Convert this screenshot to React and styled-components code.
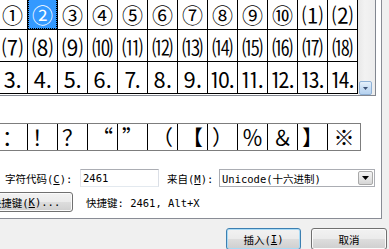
import React from 'react';
import styled, { createGlobalStyle } from 'styled-components';

const Global = createGlobalStyle`
  html, body { margin: 0; padding: 0; background: #f0f0f0; overflow: hidden; }
  body { width: 389px; height: 249px; }
`;

const Dialog = styled.div`
  width: 389px;
  height: 249px;
  overflow: hidden;
  background: #f0f0f0;
  display: flex;
  flex-direction: column;
  font-family: "DejaVu Sans Mono", "Noto Sans CJK SC", monospace;
  font-size: 10.5px;
  color: #000;
`;

const TabPage = styled.div`
  box-sizing: border-box;
  flex: none;
  width: 382px;
  height: 219px;
  background: #fff;
  border-right: 1px solid #898c95;
  border-bottom: 1px solid #898c95;
  display: flex;
  flex-direction: column;
`;

const SymbolBox = styled.div`
  display: flex;
  align-self: flex-start;
  margin: -4px 0 0 -4px;
  border: 1px solid #828790;
`;

const Grid = styled.div`
  display: grid;
  grid-template-columns: repeat(12, 29px);
  grid-auto-rows: 31px;
  gap: 1px;
  background: #000;
  border: 1px solid #000;
  margin-bottom: 1px;
`;

const Cell = styled.div`
  display: flex;
  align-items: center;
  justify-content: center;
  overflow: hidden;
  background: ${(p) => (p.$sel ? '#3399ff' : '#fff')};
  color: ${(p) => (p.$sel ? '#fff' : '#000')};
  font-family: "Noto Sans CJK SC", sans-serif;
  font-size: ${(p) => p.$size}px;
  line-height: 1.2;
  padding-top: 2px;
  box-sizing: border-box;
  ${(p) => (p.$sel ? 'outline: 1px dotted #000; outline-offset: -1px;' : '')}
`;

const ScrollBar = styled.div`
  box-sizing: border-box;
  width: 17px;
  padding: 0 3px 0 1px;
  background: linear-gradient(90deg, #e8e8e8, #f2f2f2 40%, #ededed);
  display: flex;
  flex-direction: column;
  justify-content: flex-end;
`;

const ScrollDown = styled.div`
  box-sizing: border-box;
  width: 13px;
  height: 14px;
  border: 1px solid #8fb1d6;
  border-radius: 2px;
  background: linear-gradient(#e6f1fb, #c9def4 50%, #b6d2ef);
  display: flex;
  align-items: center;
  justify-content: center;
`;

const RecentRow = styled.div`
  display: flex;
  align-self: flex-start;
  margin: 27px 0 0 -3px;
  border-top: 1px solid #7d7d7d;
  border-bottom: 1px solid #7d7d7d;
  border-left: 1px solid #000;
`;

const RecentCell = styled.div`
  width: ${(p) => p.$w || 29}px;
  height: 26px;
  border-right: 1px solid ${(p) => (p.$last ? '#7d7d7d' : '#000')};
  display: flex;
  align-items: center;
  justify-content: center;
  font-family: "Noto Sans CJK SC", sans-serif;
  font-size: 21px;
  line-height: 1.2;
`;

const FormRow = styled.div`
  display: flex;
  align-items: center;
  height: ${(p) => p.$h}px;
  margin-top: ${(p) => p.$mt}px;
  padding-left: 5px;
  white-space: nowrap;
`;

const Label = styled.div`
  flex: none;
  width: ${(p) => p.$w}px;
  margin-left: ${(p) => p.$ml || 0}px;
`;

const Key = styled.span`
  text-decoration: underline;
  text-underline-offset: 1px;
`;

const TextBox = styled.div`
  box-sizing: border-box;
  flex: none;
  width: ${(p) => p.$w}px;
  height: 18px;
  border: 1px solid #abadb3;
  border-color: #abadb3 #dbdfe6 #e3e9ef #e2e3ea;
  background: #fff;
  display: flex;
  align-items: center;
  padding-left: 2px;
`;

const SelectBox = styled(TextBox)`
  border: 1px solid #abadb3;
  justify-content: space-between;
  padding-right: 1px;
`;

const DropButton = styled.div`
  box-sizing: border-box;
  width: 15px;
  height: 14px;
  border: 1px solid #a9a9a9;
  border-radius: 2px;
  background: linear-gradient(#f4f4f4, #e6e6e6 50%, #d6d6d6);
  display: flex;
  align-items: center;
  justify-content: center;
`;

const Button = styled.div`
  box-sizing: border-box;
  flex: none;
  width: ${(p) => p.$w}px;
  height: ${(p) => p.$h || 22}px;
  margin-left: ${(p) => p.$ml || 0}px;
  border: 1px solid ${(p) => (p.$default ? '#3c7fb1' : '#707070')};
  border-radius: 3px;
  background: linear-gradient(#f2f2f2 0%, #ebebeb 48%, #dddddd 52%, #cfcfcf 100%);
  box-shadow: inset 0 0 0 1px ${(p) => (p.$default ? '#a9dbf6' : '#fbfbfb')};
  display: flex;
  align-items: center;
  justify-content: center;
  white-space: nowrap;
`;

const Hint = styled.div`
  margin-left: 13px;
`;

const ButtonBar = styled.div`
  display: flex;
  justify-content: flex-end;
  gap: 10px;
  padding: 9px 2px 0 0;
`;

const Arrow = ({ color, w = 7, h = 4 }) => (
  <svg width={w} height={h} viewBox="0 0 7 4">
    <path d="M0 0 H7 L3.5 4 Z" fill={color} />
  </svg>
);

const rows = [
  { size: 21, chars: ['①', '②', '③', '④', '⑤', '⑥', '⑦', '⑧', '⑨', '⑩', '⑴', '⑵'] },
  { size: 21, chars: ['⑺', '⑻', '⑼', '⑽', '⑾', '⑿', '⒀', '⒁', '⒂', '⒃', '⒄', '⒅'] },
  { size: 22, chars: ['⒊', '⒋', '⒌', '⒍', '⒎', '⒏', '⒐', '⒑', '⒒', '⒓', '⒔', '⒕'] },
];

const recent = ['：', '！', '？', '“', '”', '（', '【', '）', '％', '＆', '】', '※'];

export default function App() {
  return (
    <>
      <Global />
      <Dialog>
        <TabPage>
          <SymbolBox>
            <Grid>
              {rows.map((r, ri) =>
                r.chars.map((c, ci) => (
                  <Cell key={`${ri}-${ci}`} $size={r.size} $sel={ri === 0 && ci === 1}>
                    {c}
                  </Cell>
                ))
              )}
            </Grid>
            <ScrollBar>
              <ScrollDown>
                <Arrow color="#3d5275" w={5} h={3} />
              </ScrollDown>
            </ScrollBar>
          </SymbolBox>

          <RecentRow>
            {recent.map((c, i) => (
              <RecentCell key={i} $w={i === recent.length - 1 ? 32 : 29} $last={i === recent.length - 1}>
                {c}
              </RecentCell>
            ))}
          </RecentRow>

          <FormRow $h={18} $mt={18}>
            <Label $w={75}>
              字符代码(<Key>C</Key>):
            </Label>
            <TextBox $w={79}>2461</TextBox>
            <Label $w={52} $ml={8}>
              来自(<Key>M</Key>):
            </Label>
            <SelectBox $w={156}>
              <span>Unicode(十六进制)</span>
              <DropButton>
                <Arrow color="#000" />
              </DropButton>
            </SelectBox>
          </FormRow>

          <FormRow $h={20} $mt={5}>
            <Button $w={95} $h={20} $ml={-27}>
              快捷键(<Key>K</Key>)...
            </Button>
            <Hint>快捷键: 2461, Alt+X</Hint>
          </FormRow>
        </TabPage>

        <ButtonBar>
          <Button $w={75} $default>
            插入(<Key>I</Key>)
          </Button>
          <Button $w={76}>取消</Button>
        </ButtonBar>
      </Dialog>
    </>
  );
}
